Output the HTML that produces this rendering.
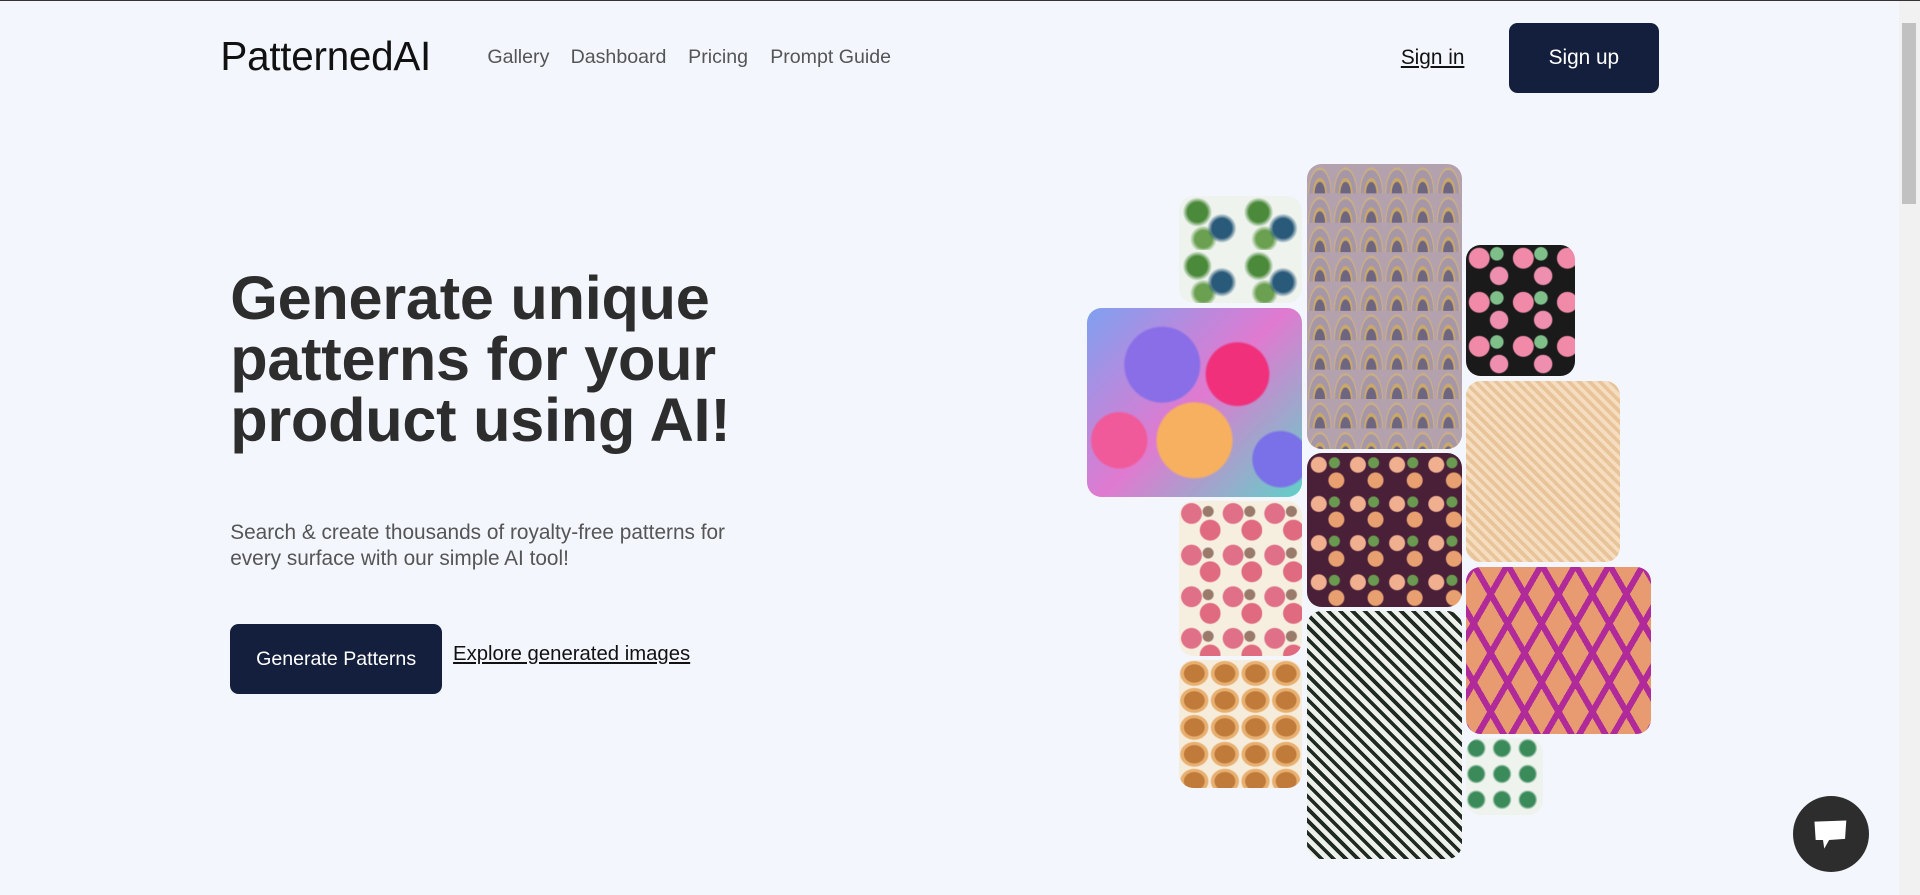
<!DOCTYPE html>
<html><head><meta charset="utf-8"><style>
html,body{margin:0;padding:0;overflow:hidden}
body{width:1568px;height:731px;zoom:1.22449;background:#f3f6fd;font-family:"Liberation Sans",sans-serif;position:relative;border-top:1px solid #333;box-sizing:border-box}
.a{position:absolute}
.logo{left:180px;top:26px;font-size:33px;color:#111;font-weight:500;letter-spacing:-0.2px}
.nav{top:37px;font-size:16px;color:#555}
.signin{left:1144px;top:37px;font-size:17px;color:#111;text-decoration:underline}
.btn{background:#131f3c;color:#fff;border-radius:7px;display:flex;align-items:center;justify-content:center;font-size:17px}
h1{margin:0;left:188px;top:218px;font-size:50px;line-height:50px;font-weight:bold;color:#2d2d2d;letter-spacing:-0.2px}
.p{left:188px;top:424px;font-size:17px;line-height:21px;color:#555}
.t{position:absolute;border-radius:12px;overflow:hidden}
.sb{left:1551px;top:0;width:17px;height:731px;background:#f1f1f1}
</style></head><body>
<div class="a logo">PatternedAI</div>
<div class="a nav" style="left:398px">Gallery</div>
<div class="a nav" style="left:466px">Dashboard</div>
<div class="a nav" style="left:562px">Pricing</div>
<div class="a nav" style="left:629px">Prompt Guide</div>
<div class="a signin">Sign in</div>
<div class="a btn" style="left:1232px;top:18px;width:123px;height:57px">Sign up</div>
<h1 class="a">Generate unique<br>patterns for your<br>product using AI!</h1>
<div class="a p">Search &amp; create thousands of royalty-free patterns for<br>every surface with our simple AI tool!</div>
<div class="a btn" style="left:188px;top:509px;width:173px;height:57px;font-size:16px">Generate Patterns</div>
<div class="a" style="left:370px;top:524px;font-size:16.6px;color:#111;text-decoration:underline">Explore generated images</div>

<div class="t" style="left:963px;top:159px;width:100px;height:88px;background:radial-gradient(circle at 30% 30%,#4a8a3a 0 8px,transparent 12px),radial-gradient(circle at 70% 60%,#2a5a7a 0 8px,transparent 12px),radial-gradient(circle at 40% 80%,#6aa050 0 7px,transparent 11px),#eef3ee;background-size:50px 44px"></div>
<div class="t" style="left:1067px;top:133px;width:127px;height:233px;background:radial-gradient(ellipse 10px 22px at 50% 100%,#6e6580 0 40%,#c9a86a 45% 55%,#a596a8 60% 85%,#d1b27a 90%,#b3a1ae 100%);background-size:21px 24px;background-color:#b3a1ae"></div>
<div class="t" style="left:1197px;top:199px;width:89px;height:107px;background:radial-gradient(circle at 30% 30%,#f08aa8 0 8px,transparent 9px),radial-gradient(circle at 75% 70%,#ee8fb0 0 7px,transparent 8px),radial-gradient(circle at 70% 20%,#7fc08a 0 5px,transparent 6px),#1a1a1a;background-size:36px 36px"></div>
<div class="t" style="left:888px;top:251px;width:175px;height:154px;background:radial-gradient(circle at 35% 30%,#8a6ee8 0 30px,transparent 32px),radial-gradient(circle at 70% 35%,#f0307a 0 25px,transparent 27px),radial-gradient(circle at 50% 70%,#f7b060 0 30px,transparent 32px),radial-gradient(circle at 15% 70%,#f05a9a 0 22px,transparent 24px),radial-gradient(circle at 90% 80%,#7a70e8 0 22px,transparent 24px),linear-gradient(135deg,#7fa0f0,#e07ad0,#60d0c8)"></div>
<div class="t" style="left:1197px;top:310px;width:126px;height:148px;background:repeating-linear-gradient(45deg,#e8c49a 0 3px,#f6ddc0 3px 6px),#f0d0a8"></div>
<div class="t" style="left:963px;top:408px;width:100px;height:127px;background:radial-gradient(circle at 30% 30%,#e07088 0 8px,transparent 9px),radial-gradient(circle at 75% 70%,#e06a80 0 8px,transparent 9px),radial-gradient(circle at 70% 25%,#9a7a6a 0 4px,transparent 5px),#f6efe0;background-size:34px 34px"></div>
<div class="t" style="left:1067px;top:369px;width:127px;height:126px;background:radial-gradient(circle at 30% 30%,#f0b090 0 6px,transparent 7px),radial-gradient(circle at 75% 70%,#e8a070 0 6px,transparent 7px),radial-gradient(circle at 70% 25%,#6a9a50 0 4px,transparent 5px),#4a2038;background-size:32px 32px"></div>
<div class="t" style="left:1197px;top:462px;width:151px;height:137px;background:repeating-linear-gradient(60deg,#b02a9a 0 5px,transparent 5px 24px),repeating-linear-gradient(-60deg,#b02a9a 0 5px,transparent 5px 24px),#e89a70"></div>
<div class="t" style="left:963px;top:538px;width:100px;height:105px;background:radial-gradient(ellipse at 50% 50%,#c07a3a 0 8px,#e8b070 9px 11px,transparent 12px),#f6ecdc;background-size:25px 22px"></div>
<div class="t" style="left:1067px;top:498px;width:127px;height:203px;background:repeating-linear-gradient(45deg,#1e2a22 0 3px,#eef0ea 3px 7px),#eee"></div>
<div class="t" style="left:1197px;top:602px;width:63px;height:63px;background:radial-gradient(circle at 40% 40%,#3a8a5a 0 6px,transparent 8px),#eef3ee;background-size:21px 21px"></div>

<div class="a" style="left:1464px;top:649px;width:62px;height:62px;border-radius:50%;background:#2d2d2d"></div>
<svg class="a" style="left:1480px;top:667px" width="30" height="28" viewBox="0 0 30 28"><path d="M2 3 L28 2 L27 17 L14 18 L10 25 L9 18 L3 18 Z" fill="#fff"/></svg>
<div class="a sb"><div class="a" style="left:2px;top:18px;width:12px;height:148px;background:#c1c1c1"></div></div>
</body></html>
